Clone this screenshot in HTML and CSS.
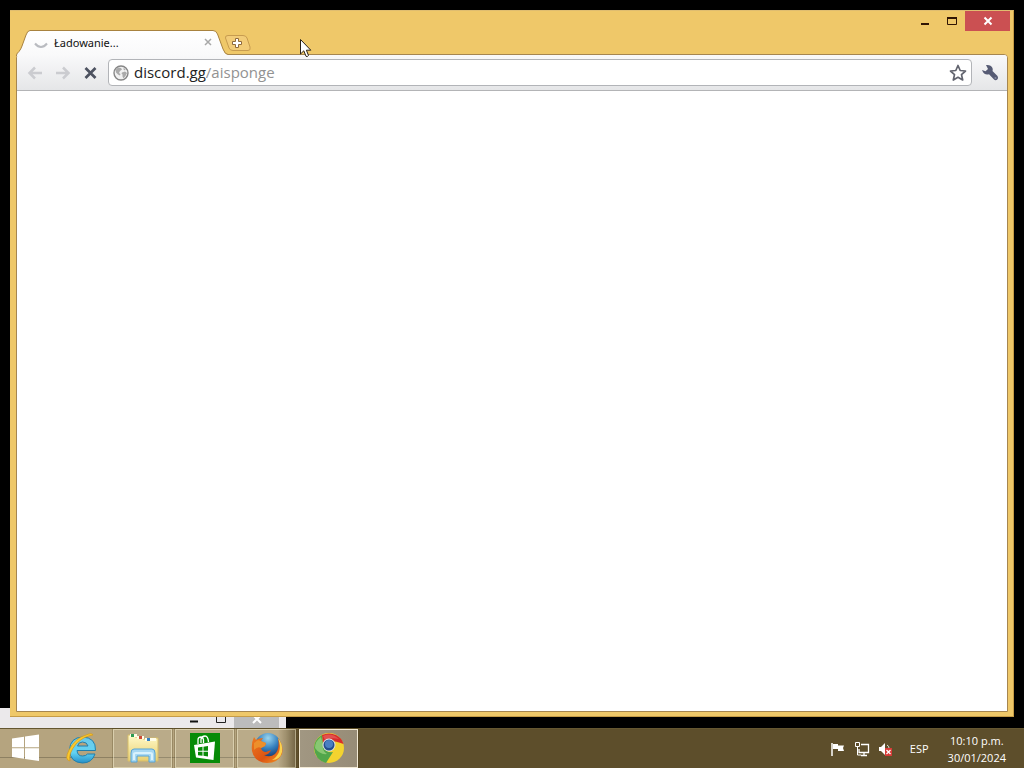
FILE: index.html
```html
<!DOCTYPE html>
<html lang="es">
<head>
    <meta charset="UTF-8">
    <meta name="viewport" content="width=device-width, initial-scale=1.0">
    <title>Ładowanie...</title>
    <link rel="stylesheet" href="styles.css">
</head>
<body>
    <main class="desktop">
        <!-- Window peeking out from behind the browser -->
        <div class="back-window">
            <button class="back-btn" aria-label="Minimize"><svg width="10" height="8"><path d="M1 5.500h8" stroke="#111" stroke-width="2"/></svg></button>
            <button class="back-btn" aria-label="Maximize"><svg width="12" height="8"><path d="M1.500 0v6.500h9V0" fill="none" stroke="#222"/></svg></button>
            <button class="back-btn back-close" aria-label="Close"><svg width="10" height="8"><path d="M1 7l4-4 4 4M2 0l3 3 3-3" fill="none" stroke="#fff" stroke-width="2"/></svg></button>
        </div>

        <section class="browser">
            <header class="titlebar">
                <div class="tab">
                    <svg class="tab-shape" viewBox="0 0 212 26" preserveAspectRatio="none">
                        <defs>
                            <linearGradient id="tabFill" x1="0" y1="0" x2="0" y2="1">
                                <stop offset="0" stop-color="#fff"/>
                                <stop offset="1" stop-color="#f9f9fa"/>
                            </linearGradient>
                        </defs>
                        <path d="M.5 26V25Q1 23 3 21.500Q5 19 6 16L10 5Q11.500 .5 14 .5H197Q200 .5 201.500 4L207 19Q209 24.500 212 24.500V26Z" fill="url(#tabFill)"/>
                        <path d="M.5 26V25Q1 23 3 21.500Q5 19 6 16L10 5Q11.500 .5 14 .5H197Q200 .5 201.500 4L207 19Q209 24.500 212 24.500" fill="none" stroke="#a8823f"/>
                    </svg>
                    <svg class="spinner" width="16" height="16"><path d="M2 9.500Q8 16.500 14 9.500" fill="none" stroke="#b9bbc0" stroke-width="2"/></svg>
                    <span class="tab-title">Ładowanie...</span>
                    <button class="tab-close" aria-label="Close tab"><svg width="8" height="8"><path d="M1 1l6 6M7 1L1 7" stroke="#a8a8a8" stroke-width="1.500"/></svg></button>
                </div>
                <button class="new-tab" aria-label="New tab">
                    <svg width="27" height="17">
                        <path d="M4 .5H19Q22 .5 23 3L26 12Q27 15.500 24 15.500H9Q6 15.500 5 13L1.500 3Q1 .5 4 .5Z" fill="#f2cc78" stroke="#c79c50"/>
                        <path d="M11.500 3.500h3v3h3v3h-3v3h-3v-3h-3v-3h3z" fill="#fff" stroke="#8f6a3c"/>
                    </svg>
                </button>
                <div class="window-buttons">
                    <button class="win-btn" aria-label="Minimize"><svg width="10" height="10"><path d="M1 8h8" stroke="#301504" stroke-width="2"/></svg></button>
                    <button class="win-btn" aria-label="Maximize"><svg width="12" height="10"><path d="M1.500 1.500h9v7h-9z" fill="none" stroke="#301504"/><path d="M1 2h10" stroke="#301504" stroke-width="2"/></svg></button>
                    <button class="win-btn win-close" aria-label="Close"><svg width="10" height="10"><path d="M1.500 1.500l7 7M8.500 1.500l-7 7" stroke="#fff" stroke-width="2"/></svg></button>
                </div>
            </header>

            <div class="client">
                <form class="toolbar">
                    <button type="button" class="tool" aria-label="Back"><svg width="16" height="16"><path d="M15 8H3M8 2.500L2.500 8L8 13.500" fill="none" stroke="#cbccd0" stroke-width="2.500"/></svg></button>
                    <button type="button" class="tool" aria-label="Forward"><svg width="16" height="16"><path d="M1 8h12M8 2.500L13.500 8L8 13.500" fill="none" stroke="#cbccd0" stroke-width="2.500"/></svg></button>
                    <button type="button" class="tool" aria-label="Stop"><svg width="16" height="16"><path d="M2.500 3l10 10M12.500 3l-10 10" stroke="#4d5260" stroke-width="2.700"/></svg></button>
                    <div class="omnibox">
                        <svg class="globe" width="16" height="16">
                            <circle cx="8" cy="8" r="7" fill="#f1f1f1" stroke="#868686" stroke-width="1.400"/>
                            <path d="M2.500 5L5 2.500l3 .5 1 1.500-2 1.500-1 2 1.500 1-.5 1.500-2-1-2-2zM9 7.500l3-1 2 1.500-1.500 3-2 2.500-1-2 0-2-1-1zM10.500 3l2 1-.5 1.500-1.500-1z" fill="#aaa"/>
                        </svg>
                        <label class="host" for="url">discord.gg</label>
                        <input class="path" id="url" type="text" value="/aisponge">
                        <button type="button" class="star" aria-label="Bookmark"><svg width="18" height="18"><path d="M9 1.500l2.200 5 5.300.5-4 3.600 1.200 5.400L9 13.300 4.300 16l1.200-5.400-4-3.600 5.300-.5z" fill="#fff" stroke="#62646f" stroke-width="1.700" stroke-linejoin="round"/></svg></button>
                    </div>
                    <button type="button" class="wrench" aria-label="Menu"><svg width="18" height="18"><path d="M5 1Q10 .5 11.500 4Q12 6 11.500 7L16.500 12Q17.800 14 16.300 15.500Q14.500 17 12.800 15.300L8 10.300Q3 11.500 1 6L4.500 7.200L7 5Z" fill="#565b74"/><circle cx="14.500" cy="14" r="1" fill="#858aa0"/></svg></button>
                </form>
                <div class="page"></div>
            </div>
        </section>

        <svg class="cursor" width="14" height="22"><path d="M1.500 1.500V16l3.300-3.200L7 18.300Q8.200 19.200 9.500 17.500L7.400 12.200H11.800Z" fill="#fff" stroke="#2a2218"/></svg>
    </main>

    <footer class="taskbar">
        <button class="start" aria-label="Start">
            <svg width="28" height="28"><path d="M0 4.500L12 2.800V13.200H0ZM13 2.600L27 .5V13.200H13ZM0 14.200H12V24.800L0 23ZM13 14.200H27V27L13 25Z" fill="#fff"/></svg>
        </button>
        <nav class="apps">
            <button class="app app-plain" aria-label="Internet Explorer">
                <svg width="32" height="32">
                    <defs>
                        <linearGradient id="ieBlue" x1="0" y1="0" x2="0" y2="1">
                            <stop offset="0" stop-color="#6cc9ea"/>
                            <stop offset=".6" stop-color="#62d3f2"/>
                            <stop offset="1" stop-color="#258fc8"/>
                        </linearGradient>
                    </defs>
                    <path d="M30.500 18.500H12Q12.500 24 17.500 24Q21 24 22.500 22H30Q27 31 17.500 31Q5 30.500 4.500 18Q5 5.500 17.500 5Q31 5.500 30.500 18.500ZM12.500 14H23Q22 10 17.500 10Q13.500 10 12.500 14Z" fill="url(#ieBlue)" stroke="#217fac" fill-rule="evenodd"/>
                    <path d="M5 29Q-1 28 4 18Q10 6 21 3Q27 .5 28 3Q19 4 11 12Q3 22 5 29Z" fill="#f9c82d" stroke="#d69a19" stroke-width=".7"/>
                </svg>
            </button>
            <button class="app" aria-label="File Explorer">
                <svg width="32" height="32">
                    <defs>
                        <linearGradient id="folder" x1="0" y1="0" x2="0" y2="1">
                            <stop offset="0" stop-color="#fff9c9"/>
                            <stop offset="1" stop-color="#e9d070"/>
                        </linearGradient>
                    </defs>
                    <path d="M1 29V3H8V5H16V7H23V6H31V29Z" fill="url(#folder)" stroke="#d7bd69"/>
                    <path d="M3 3.500h7M10 5.500h7M18 7.500h11" stroke="#fffde9" stroke-width="3"/>
                    <path d="M4 3.500h3" stroke="#2c9a52" stroke-width="3"/><path d="M12 5.500h3" stroke="#ce4934" stroke-width="3"/><path d="M20 7.500h3" stroke="#3480c2" stroke-width="3"/>
                    <path d="M4 30V21Q4 17 7 17H25Q28 17 28 21V30H22V24H10V30Z" fill="#a7d8f2" stroke="#56a4d5"/>
                    <path d="M7 28v-6q0-1 2-1h14q2 0 2 1v6" fill="none" stroke="#d8f2fc" stroke-width="2"/>
                </svg>
            </button>
            <button class="app" aria-label="Store">
                <svg width="32" height="32">
                    <path d="M1 1h30v30H1z" fill="#078b08"/>
                    <path d="M9 12V8Q9 5 12 5Q14 5 14.500 8V11M12 11V7Q13 4 16 4Q19 4 19.500 10" fill="none" stroke="#fff" stroke-width="1.300"/>
                    <path d="M5 13L26 9.500L24.500 28L7 25.500Z" fill="#fff"/>
                    <path d="M9 15.500l4.500-.7v4H9zM14.500 14.700l4.500-.7v4.800h-4.500zM9 19.700h4.500v4l-4.500-.5zM14.500 19.700h4.500v4.800l-4.500-.7z" fill="#078b08"/>
                </svg>
            </button>
            <button class="app" aria-label="Firefox">
                <svg width="32" height="32">
                    <defs>
                        <radialGradient id="ffBlue" cx=".5" cy=".2" r=".8">
                            <stop offset="0" stop-color="#9bd5ee"/>
                            <stop offset=".5" stop-color="#357fbd"/>
                            <stop offset="1" stop-color="#102e63"/>
                        </radialGradient>
                        <linearGradient id="ffFire" x1="0" y1="0" x2="1" y2="1">
                            <stop offset="0" stop-color="#ec7a20"/>
                            <stop offset=".6" stop-color="#dc5412"/>
                            <stop offset="1" stop-color="#f39a25"/>
                        </linearGradient>
                    </defs>
                    <circle cx="17" cy="14" r="13" fill="url(#ffBlue)"/>
                    <path d="M3 5L5 8Q8 6 12 6L10 9Q12 11 15 11L14 14L10 16Q11 20 15 20L20 18Q18 23 13 23Q19 26 24 22Q29 17 27 6Q33 14 31 22Q27 31 16 31Q3 30 1 19Q0 11 3 5Z" fill="url(#ffFire)"/>
                    <path d="M27 6Q30 14 28 20Q26 25 21 28Q29 28 31 20Q32 12 27 6Z" fill="#fad34e"/>
                    <path d="M3 11L7 8L10 9L15 11L14 14L10 16Q7 14 3 18Z" fill="#ed8f2b"/>
                </svg>
            </button>
            <button class="app app-active" aria-label="Chrome">
                <svg width="32" height="32">
                    <circle cx="16" cy="16" r="15" fill="#f3d32f"/>
                    <path d="M9 3Q16 0 23 3Q29 6 30.500 12Q23 9 17 9Q12 10 10 14Z" fill="#d72d2c"/>
                    <path d="M9 3Q1 8 1 16Q2 28 13 31L20 20Q12 21 10 14Z" fill="#52a64b"/>
                    <path d="M8 5Q2 9 2 16Q7 23 14 22Q9 19 10 13Z" fill="#96d07c" opacity=".8"/>
                    <path d="M10 4Q18 0 26 7Q18 5 12 8Z" fill="#ee7770" opacity=".5"/>
                    <circle cx="16" cy="13" r="6.500" fill="#e0e5e5"/>
                    <circle cx="16" cy="13" r="5.500" fill="#244e8f"/>
                    <circle cx="16" cy="12" r="4" fill="#4a7fc2"/>
                </svg>
            </button>
        </nav>
        <div class="tray">
            <svg width="16" height="16"><path d="M2 2v13" stroke="#fff" stroke-width="1.500"/><path d="M3 3h5v1.500h6L13 7l1 3H8V8H3Z" fill="#fff"/></svg>
            <svg width="16" height="16"><path d="M7 3.500h7.500v8H5V8M7 14.500h6M10 12v2" fill="none" stroke="#fff" stroke-width="1.300"/><path d="M1.500 1.500h4v4h-4zM3.500 6v8H7" fill="none" stroke="#fff"/></svg>
            <svg width="16" height="16"><path d="M1 6h2l4-4v12l-4-4H1z" fill="#fff"/><path d="M9 4q2 1 2 3" fill="none" stroke="#ddd"/><path d="M7 7h7v8H7z" fill="#d73b37"/><path d="M8.500 9l4 4M12.500 9l-4 4" stroke="#fff" stroke-width="1.300"/></svg>
            <button class="lang">ESP</button>
            <button class="clock"><time>10:10 p.m.</time><time>30/01/2024</time></button>
        </div>
    </footer>
</body>
</html>
```
FILE: styles.css
```css
* {
    box-sizing: border-box;
}

body {
    margin: 0;
    height: 100vh;
    display: flex;
    flex-direction: column;
    overflow: hidden;
    background-color: #000;
    font-family: "Open Sans", "Noto Sans", sans-serif;
}

button {
    padding: 0;
    border: none;
    background: none;
    font: inherit;
    color: inherit;
}

svg {
    display: block;
    flex: none;
}

.desktop {
    position: relative;
    flex: 1;
    display: flex;
    padding: 10px 10px 11px;
    min-height: 0;
}

/* Window behind the browser */
.back-window {
    position: absolute;
    left: 0;
    bottom: 0;
    width: 286px;
    height: 20px;
    display: flex;
    justify-content: flex-end;
    align-items: flex-end;
    padding-right: 7px;
    background-color: #ebe9eb;
}

.back-btn {
    width: 27px;
    height: 20px;
    display: flex;
    justify-content: center;
    align-items: flex-end;
    padding-bottom: 4px;
}

.back-close {
    width: 45px;
    background-color: #bcbcbc;
}

/* Browser */
.browser {
    position: relative;
    flex: 1;
    display: flex;
    flex-direction: column;
    padding: 0 5px 4px 6px;
    background-color: #efc869;
    border: 1px solid #c69c47;
    border-top-color: #dfbd70;
    border-left-width: 0;
}

.titlebar {
    height: 43px;
    display: flex;
    align-items: flex-end;
}

.tab {
    position: relative;
    z-index: 1;
    width: 212px;
    height: 24px;
    display: flex;
    align-items: center;
    padding: 0 16px 0 17px;
}

.tab-shape {
    position: absolute;
    left: 0;
    top: 0;
    width: 100%;
    height: 26px;
}

.spinner,
.tab-title,
.tab-close {
    position: relative;
}

.tab-title {
    flex: 1;
    padding-left: 5px;
    font-family: "Noto Sans", "Open Sans", sans-serif;
    font-size: 11px;
    color: #111;
}

.new-tab {
    margin: 0 auto 2px -4px;
    position: relative;
    z-index: 1;
}

.window-buttons {
    display: flex;
    align-self: flex-start;
    margin-right: -2px;
}

.win-btn {
    width: 27px;
    height: 20px;
    display: flex;
    justify-content: center;
    align-items: center;
}

.win-close {
    width: 45px;
    background-color: #cb5052;
}

.client {
    flex: 1;
    display: flex;
    flex-direction: column;
    border: 1px solid #a68650;
    border-radius: 4px 4px 0 0;
    background-color: #fff;
}

.toolbar {
    height: 36px;
    display: flex;
    align-items: center;
    padding: 0 8px 0 4px;
    background: linear-gradient(#f9f9fa, #e5e6e8);
    border-bottom: 1px solid #b3b4b6;
    border-radius: 3px 3px 0 0;
}

.tool {
    width: 28px;
    height: 28px;
    display: flex;
    justify-content: center;
    align-items: center;
}

.omnibox {
    flex: 1;
    height: 27px;
    display: flex;
    align-items: center;
    margin: 0 9px 0 3px;
    padding: 0 4px;
    background-color: #fff;
    border: 1px solid #b2b4b8;
    border-radius: 4px;
    font-size: 15px;
    line-height: 20px;
}

.host {
    padding: 0 0 2px 5px;
    color: #222;
}

.path {
    flex: 1;
    min-width: 0;
    padding: 0 0 2px;
    border: none;
    outline: none;
    background: none;
    font: inherit;
    color: #929292;
}

.page {
    flex: 1;
}

.cursor {
    position: absolute;
    left: 299px;
    top: 38px;
}

/* Taskbar */
.taskbar {
    position: relative;
    z-index: 0;
    height: 40px;
    display: flex;
    align-items: center;
    background-color: #5d4e2b;
    border-top: 1px solid #655731;
    color: #fff;
}

/* Blurred outline of the window below the bar */
.taskbar::before {
    content: "";
    position: absolute;
    z-index: -1;
    left: 0;
    top: 0;
    bottom: 0;
    width: 298px;
    background: linear-gradient(#8d8062, #8d8062) 0 28px / 278px 1px no-repeat,
        linear-gradient(to right, #b5a47f 278px, #978762 286px, #5d4e2b 298px);
}

.start {
    width: 51px;
    height: 39px;
    display: flex;
    justify-content: center;
    align-items: center;
    padding-bottom: 2px;
}

.apps {
    display: flex;
    gap: 3px;
}

.app {
    width: 59px;
    height: 39px;
    display: flex;
    justify-content: center;
    align-items: center;
    padding-bottom: 2px;
    background-color: rgba(255, 255, 255, 0.08);
    border: 1px solid rgba(255, 248, 218, 0.45);
    outline: 1px solid rgba(70, 55, 20, 0.25);
}

.app-plain {
    background: none;
    border-color: transparent;
    outline: none;
}

.app-active {
    background: linear-gradient(to right, #a19782, #978c77);
    border-color: #f2e9d4;
}

.tray {
    flex: 1;
    display: flex;
    justify-content: flex-end;
    align-items: center;
    gap: 8px;
    padding-right: 18px;
    font-size: 11px;
}

.lang {
    padding: 0 11px 0 8px;
}

.clock {
    display: flex;
    flex-direction: column;
    align-items: center;
    line-height: 17px;
}
```
